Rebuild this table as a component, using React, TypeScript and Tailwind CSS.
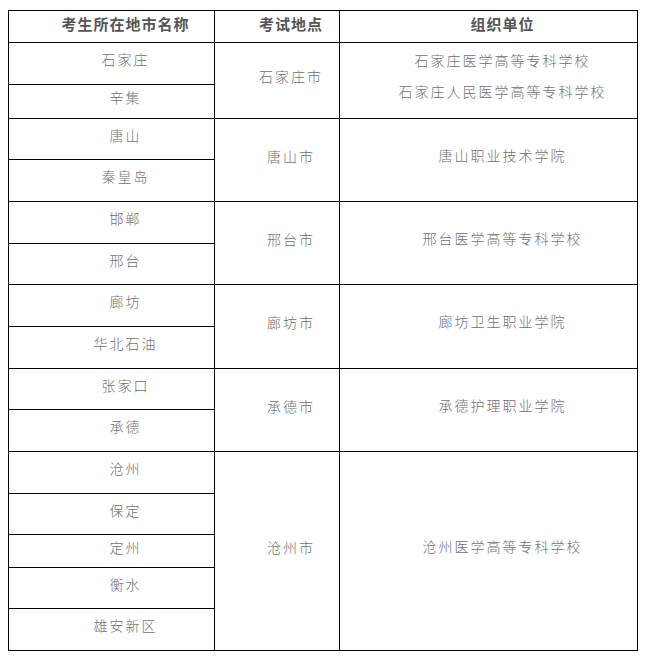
const groups = [
  {
    cities: ['石家庄', '辛集'],
    site: '石家庄市',
    orgs: ['石家庄医学高等专科学校', '石家庄人民医学高等专科学校'],
    heights: [42, 34],
  },
  { cities: ['唐山', '秦皇岛'], site: '唐山市', orgs: ['唐山职业技术学院'], heights: [41, 42] },
  { cities: ['邯郸', '邢台'], site: '邢台市', orgs: ['邢台医学高等专科学校'], heights: [42, 41] },
  { cities: ['廊坊', '华北石油'], site: '廊坊市', orgs: ['廊坊卫生职业学院'], heights: [42, 42] },
  { cities: ['张家口', '承德'], site: '承德市', orgs: ['承德护理职业学院'], heights: [41, 42] },
  {
    cities: ['沧州', '保定', '定州', '衡水', '雄安新区'],
    site: '沧州市',
    orgs: ['沧州医学高等专科学校'],
    heights: [42, 41, 33, 41, 42],
  },
]

const font = { fontFamily: '"Noto Sans CJK SC", "Liberation Sans", sans-serif' }

const rowHeight = (h: number) =>
  h === 33 ? 'h-[33px]' : h === 34 ? 'h-[34px]' : h === 41 ? 'h-[41px]' : 'h-[42px]'

export default function App() {
  return (
    <div className="w-[649px] h-[659px] bg-white pt-[10px] pl-[8px]" style={font}>
      <table className="table-fixed border-collapse w-[629px] text-[14px] font-light text-[#707070] tracking-[2px]">
        <colgroup>
          <col className="w-[206px]" />
          <col className="w-[125px]" />
          <col className="w-[298px]" />
        </colgroup>
        <thead>
          <tr className="h-[32px]">
            {['考生所在地市名称', '考试地点', '组织单位'].map((h) => (
              <th
                key={h}
                className="border border-black text-center align-middle pl-[28px] pb-[5px] font-bold text-[15px] tracking-[1px] text-[#555]"
              >
                {h}
              </th>
            ))}
          </tr>
        </thead>
        <tbody>
          {groups.map((g) =>
            g.cities.map((city, i) => (
              <tr key={city} className={rowHeight(g.heights[i])}>
                <td className="border border-black text-center align-middle pl-[28px] pb-[9px] leading-[20px]">
                  {city}
                </td>
                {i === 0 && (
                  <>
                    <td
                      rowSpan={g.cities.length}
                      className="border border-black text-center align-middle pl-[28px] pb-[9px] leading-[20px]"
                    >
                      {g.site}
                    </td>
                    <td
                      rowSpan={g.cities.length}
                      className="border border-black text-center align-middle pl-[28px] pb-[10px] leading-[31px]"
                    >
                      {g.orgs.map((o) => (
                        <div key={o}>{o}</div>
                      ))}
                    </td>
                  </>
                )}
              </tr>
            ))
          )}
        </tbody>
      </table>
    </div>
  )
}
